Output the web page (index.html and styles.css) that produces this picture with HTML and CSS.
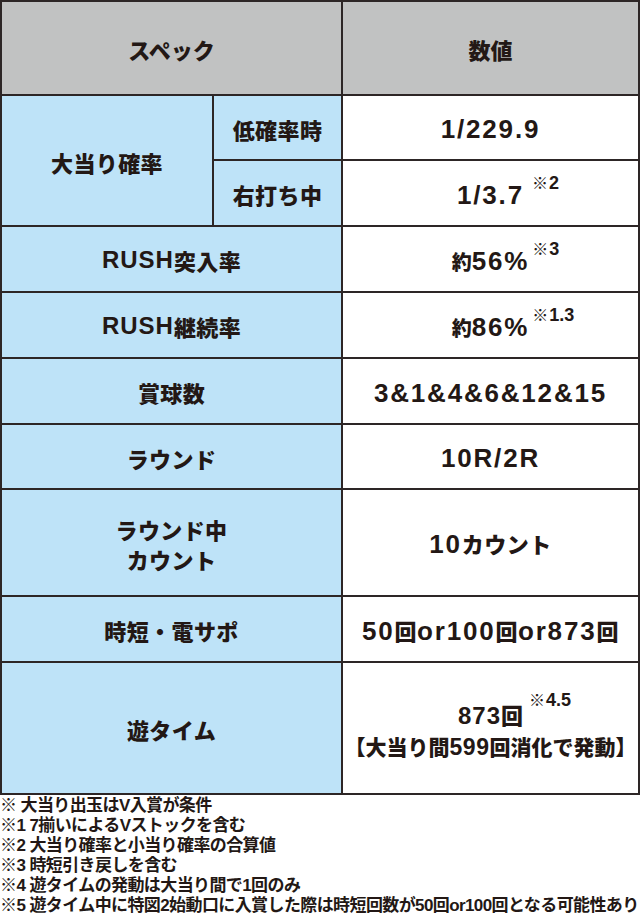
FILE: index.html
```html
<!DOCTYPE html>
<html lang="ja">
<head>
<meta charset="utf-8">
<title>スペック</title>
<link rel="stylesheet" href="styles.css">
</head>
<body>
<div class="spec">
  <div class="cell head span2">スペック</div>
  <div class="cell head">数値</div>

  <div class="cell label rows2">大当り確率</div>
  <div class="cell label">低確率時</div>
  <div class="cell value"><span class="val">1/229.9</span></div>
  <div class="cell label">右打ち中</div>
  <div class="cell value"><span class="val">1/3.7<span class="note n-wide"><span class="kome">※</span>2</span></span></div>

  <div class="cell label span2"><span class="lat">RUSH</span>突入率</div>
  <div class="cell value"><span class="val"><span class="yaku">約</span>56%<span class="note"><span class="kome">※</span>3</span></span></div>

  <div class="cell label span2"><span class="lat">RUSH</span>継続率</div>
  <div class="cell value"><span class="val"><span class="yaku">約</span>86%<span class="note"><span class="kome">※</span>1.3</span></span></div>

  <div class="cell label span2">賞球数</div>
  <div class="cell value"><span class="val">3&amp;1&amp;4&amp;6&amp;12&amp;15</span></div>

  <div class="cell label span2">ラウンド</div>
  <div class="cell value"><span class="val">10R/2R</span></div>

  <div class="cell label span2 tall">ラウンド中<br>カウント</div>
  <div class="cell value tall"><span class="val">10<span class="j">カウント</span></span></div>

  <div class="cell label span2">時短・電サポ</div>
  <div class="cell value"><span class="val">50<span class="j">回</span>or100<span class="j">回</span>or873<span class="j">回</span></span></div>

  <div class="cell label span2 last">遊タイム</div>
  <div class="cell value last stack">
    <span class="val mid">873<span class="j">回</span><span class="note n-mid"><span class="kome">※</span>4.5</span></span>
    <span class="val small"><span class="j">【大当り間</span>599<span class="j">回消化で発動】</span></span>
  </div>
</div>
<div class="notes">
  <p>※ 大当り出玉はV入賞が条件</p>
  <p>※1 7揃いによるVストックを含む</p>
  <p>※2 大当り確率と小当り確率の合算値</p>
  <p>※3 時短引き戻しを含む</p>
  <p>※4 遊タイムの発動は大当り間で1回のみ</p>
  <p>※5 遊タイム中に特図2始動口に入賞した際は時短回数が50回or100回となる可能性あり</p>
</div>
</body>
</html>
```

FILE: styles.css
```css
html, body {
  margin: 0;
  padding: 0;
  background: #ffffff;
}

body {
  width: 640px;
  color: #231815;
  font-family: "Liberation Sans", "Noto Sans CJK JP", sans-serif;
  font-weight: 700;
}

.spec {
  display: grid;
  grid-template-columns: 210px 127px 295px;
  grid-template-rows: 92px 63px 64px 64px 64px 64px 63px 105px 64px 130px;
  gap: 2px;
  padding: 2px;
  background: #2d2626;
  width: 640px;
  box-sizing: border-box;
}

.cell {
  display: flex;
  align-items: center;
  justify-content: center;
  text-align: center;
  font-family: "Liberation Sans", "Noto Sans CJK JP", sans-serif;
  font-weight: 700;
}

.head {
  background: #c1c2c2;
  font-family: "Noto Sans CJK JP", sans-serif;
  font-weight: 900;
  font-size: 22px;
  padding-top: 2px;
}

.label {
  background: #bee3f8;
  font-family: "Noto Sans CJK JP", sans-serif;
  font-weight: 900;
  font-size: 22px;
  line-height: 30px;
  letter-spacing: 0.4px;
  padding-top: 2px;
}

.label .lat {
  font-family: "Liberation Sans", sans-serif;
  font-weight: 700;
  font-size: 24px;
  letter-spacing: 1px;
}

.span2 {
  grid-column: 1 / 3;
}

.rows2 {
  grid-row: span 2;
}

.value {
  background: #ffffff;
  padding-top: 3px;
}

.val {
  position: relative;
  display: inline-block;
  font-size: 26px;
  line-height: 1;
  letter-spacing: 1.8px;
  white-space: nowrap;
}

.val .j {
  font-family: "Noto Sans CJK JP", sans-serif;
  font-weight: 900;
  font-size: 22px;
  letter-spacing: 0.5px;
}

.val .yaku {
  font-family: "Noto Sans CJK JP", sans-serif;
  font-weight: 900;
  font-size: 20px;
  letter-spacing: 0;
}

.val.mid {
  font-size: 24px;
  letter-spacing: 1px;
}

.val.mid .j {
  font-size: 22px;
  letter-spacing: 0;
}

.val.small {
  font-size: 23px;
  letter-spacing: 0.5px;
}

.val.small .j {
  font-size: 21px;
  letter-spacing: 0;
}

.stack {
  flex-direction: column;
  gap: 8px;
  padding-top: 6px;
}

.note {
  position: absolute;
  left: 100%;
  top: -8px;
  margin-left: 3px;
  font-size: 18px;
  letter-spacing: 0;
  line-height: 1;
}

.note.n-wide {
  margin-left: 8px;
}

.note.n-mid {
  margin-left: 6px;
  top: -12px;
}

.note .kome {
  font-family: "Noto Sans CJK JP", sans-serif;
  font-size: 16px;
  font-weight: 400;
  margin-right: 1px;
}

.notes {
  padding-top: 1px;
}

.notes p {
  margin: 0;
  font-family: "Liberation Sans", "Noto Sans CJK JP", sans-serif;
  font-weight: 700;
  font-size: 17px;
  line-height: 20px;
  letter-spacing: -0.6px;
  white-space: nowrap;
}
```
